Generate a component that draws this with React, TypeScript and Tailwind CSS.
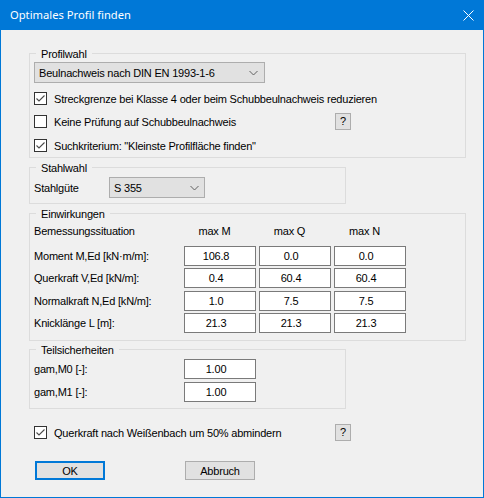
import React from "react";

function Check({ checked }: { checked: boolean }) {
  return (
    <div className="w-[13px] h-[13px] shrink-0 border border-[#333333] bg-white flex items-center justify-center">
      {checked && (
        <svg width="11" height="11" viewBox="0 0 11 11">
          <path d="M1.5 5.5 L4 8 L9.5 2.5" stroke="#4a4a4a" strokeWidth="1.1" fill="none" />
        </svg>
      )}
    </div>
  );
}

function Chevron() {
  return (
    <svg width="9" height="6" viewBox="0 0 9 6">
      <path d="M0.5 1 L4.5 5 L8.5 1" stroke="#606060" strokeWidth="1" fill="none" />
    </svg>
  );
}

function Help() {
  return (
    <div className="w-[16px] h-[17px] shrink-0 border border-[#adadad] bg-[#e1e1e1] flex items-center justify-center text-[11px] leading-none">
      ?
    </div>
  );
}

function Group({
  label,
  className,
  children,
}: {
  label: string;
  className: string;
  children: React.ReactNode;
}) {
  return (
    <div className={`relative border border-[#dcdcdc] ${className}`}>
      <span className="absolute left-[6px] top-[-7px] px-[5px] bg-[#f0f0f0] leading-[14px]">
        {label}
      </span>
      {children}
    </div>
  );
}

function Field({ value, w = "w-[72px]" }: { value: string; w?: string }) {
  return (
    <div
      className={`${w} h-[20px] shrink-0 border border-[#7a7a7a] bg-white flex items-center justify-center pr-[8px]`}
    >
      {value}
    </div>
  );
}

const rows: [string, string, string, string][] = [
  ["Moment M,Ed [kN·m/m]:", "106.8", "0.0", "0.0"],
  ["Querkraft V,Ed [kN/m]:", "0.4", "60.4", "60.4"],
  ["Normalkraft N,Ed [kN/m]:", "1.0", "7.5", "7.5"],
  ["Knicklänge L [m]:", "21.3", "21.3", "21.3"],
];

export default function App() {
  return (
    <div className="w-[484px] h-[498px] bg-[#f0f0f0] border-x border-b border-[#0078d7] flex flex-col text-black text-[11px] leading-[14px] tracking-[-0.2px] font-['Liberation_Sans',Arial,sans-serif]">
      {/* Title bar */}
      <div className="h-[30px] shrink-0 bg-[#0078d7] flex items-center pl-[9px] pr-[9px] text-white">
        <span className="text-[11.2px] tracking-normal font-['Noto_Sans',sans-serif]">
          Optimales Profil finden
        </span>
        <svg className="ml-auto" width="11" height="11" viewBox="0 0 11 11">
          <path d="M0.5 0.5 L10.5 10.5 M10.5 0.5 L0.5 10.5" stroke="white" strokeWidth="1" />
        </svg>
      </div>

      {/* Content */}
      <div className="flex flex-col pl-[28px] pt-[23px]">
        <Group label="Profilwahl" className="w-[437px] h-[105px] pt-[8px] pl-[4px] flex flex-col">
          <div className="w-[231px] h-[21px] border border-[#adadad] bg-[#e1e1e1] flex items-center pl-[4px] pr-[6px]">
            <span>Beulnachweis nach DIN EN 1993-1-6</span>
            <span className="ml-auto flex">
              <Chevron />
            </span>
          </div>
          <div className="mt-[7px] h-[17px] flex items-center gap-[7px]">
            <Check checked />
            <span>Streckgrenze bei Klasse 4 oder beim Schubbeulnachweis reduzieren</span>
          </div>
          <div className="mt-[6px] h-[17px] flex items-center gap-[7px]">
            <Check checked={false} />
            <span className="w-[274px]">Keine Prüfung auf Schubbeulnachweis</span>
            <Help />
          </div>
          <div className="mt-[7px] h-[17px] flex items-center gap-[7px]">
            <Check checked />
            <span>Suchkriterium: "Kleinste Profilfläche finden"</span>
          </div>
        </Group>

        <Group label="Stahlwahl" className="mt-[9px] w-[317px] h-[37px] pt-[9px] pl-[4px] flex">
          <div className="h-[21px] flex items-center">
            <span className="w-[75px]">Stahlgüte</span>
            <div className="w-[96px] h-[21px] border border-[#adadad] bg-[#e1e1e1] flex items-center pl-[4px] pr-[5px]">
              <span>S 355</span>
              <span className="ml-auto flex">
                <Chevron />
              </span>
            </div>
          </div>
        </Group>

        <Group label="Einwirkungen" className="mt-[9px] w-[437px] h-[128px] pt-[10px] pl-[4px] flex flex-col">
          <div className="h-[14px] flex items-center">
            <span className="w-[150px]">Bemessungssituation</span>
            <div className="flex gap-[3px]">
              <span className="w-[72px] text-center pr-[11px]">max M</span>
              <span className="w-[72px] text-center pr-[11px]">max Q</span>
              <span className="w-[72px] text-center pr-[11px]">max N</span>
            </div>
          </div>
          <div className="mt-[8px] flex flex-col gap-[2.4px]">
            {rows.map((r) => (
              <div key={r[0]} className="h-[20px] flex items-center">
                <span className="w-[150px]">{r[0]}</span>
                <div className="flex gap-[3px]">
                  <Field value={r[1]} />
                  <Field value={r[2]} />
                  <Field value={r[3]} />
                </div>
              </div>
            ))}
          </div>
        </Group>

        <Group label="Teilsicherheiten" className="mt-[8px] w-[317px] h-[60px] pt-[9px] pl-[4px] flex flex-col gap-[3px]">
          <div className="h-[20px] flex items-center">
            <span className="w-[150px]">gam,M0 [-]:</span>
            <Field value="1.00" />
          </div>
          <div className="h-[20px] flex items-center">
            <span className="w-[150px]">gam,M1 [-]:</span>
            <Field value="1.00" />
          </div>
        </Group>

        <div className="mt-[15px] ml-[5px] h-[17px] flex items-center gap-[7px]">
          <Check checked />
          <span className="w-[274px]">Querkraft nach Weißenbach um 50% abmindern</span>
          <Help />
        </div>

        <div className="mt-[20px] ml-[6px] flex gap-[80px]">
          <div className="w-[70px] h-[19px] border-2 border-[#0078d7] bg-[#e1e1e1] flex items-center justify-center">
            OK
          </div>
          <div className="w-[70px] h-[19px] border border-[#adadad] bg-[#e1e1e1] flex items-center justify-center">
            Abbruch
          </div>
        </div>
      </div>
    </div>
  );
}
